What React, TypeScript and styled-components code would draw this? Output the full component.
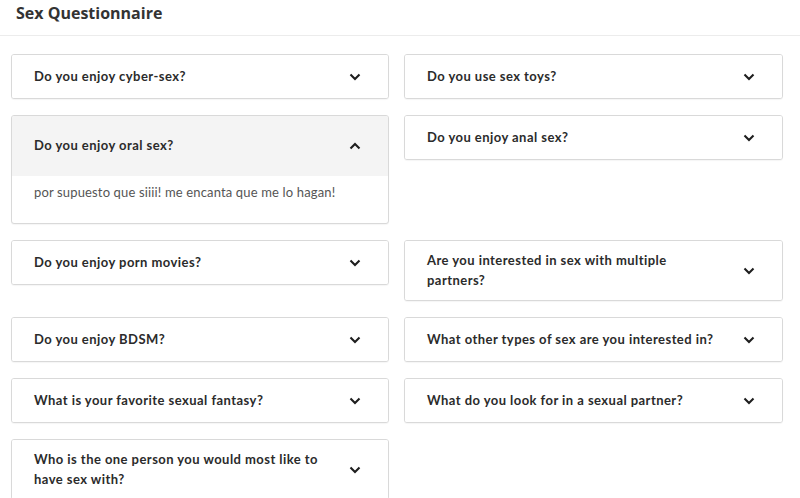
import React from "react";
import styled, { createGlobalStyle } from "styled-components";

const Global = createGlobalStyle`
  html, body { margin: 0; padding: 0; background: #fff; }
  body { font-family: Lato, "Liberation Sans", Arial, sans-serif; color: #333; }
  * { box-sizing: border-box; }
`;

const Page = styled.div`
  width: 800px;
  height: 498px;
  overflow: hidden;
  background: #fff;
`;

const TitleBar = styled.div`
  height: 36px;
  padding: 0 0 0 16px;
  border-bottom: 1px solid #ececec;
  display: flex;
  align-items: flex-start;
`;

const Title = styled.h2`
  margin: 3px 0 0;
  font-family: "Open Sans", "Liberation Sans", Arial, sans-serif;
  font-size: 16px;
  font-weight: 700;
  color: #333;
  line-height: 20px;
`;

const Grid = styled.div`
  display: grid;
  grid-template-columns: 378px 379px;
  column-gap: 15px;
  row-gap: 16px;
  align-items: start;
  padding: 18px 0 0 11px;
`;

const Card = styled.div`
  border: 1px solid #d9d9d9;
  border-radius: 3px;
  background: #fff;
  box-shadow: 0 1px 1px rgba(0, 0, 0, 0.04);
  overflow: hidden;
`;

const Header = styled.div<{ $open?: boolean }>`
  display: flex;
  align-items: center;
  justify-content: space-between;
  min-height: ${(p) => (p.$open ? "60px" : "43px")};
  padding: 10px 26px 10px 22px;
  background: ${(p) => (p.$open ? "#f4f4f4" : "#fff")};
`;

const Question = styled.span`
  font-size: 13px;
  font-weight: 700;
  line-height: 19.5px;
  color: #2b2b2b;
  letter-spacing: 0.45px;
  max-width: 295px;
`;

const Answer = styled.div`
  padding: 6px 22px 21px;
  font-size: 13px;
  line-height: 20px;
  color: #555;
  letter-spacing: 0.15px;
`;

const Chevron = ({ up }: { up?: boolean }) => (
  <svg width="14" height="10" viewBox="0 0 14 10" style={{ flexShrink: 0 }}>
    <path
      d={up ? "M2.5 7.5 L7 3 L11.5 7.5" : "M2.5 2.5 L7 7 L11.5 2.5"}
      fill="none"
      stroke="#1e1e1e"
      strokeWidth="2.1"
    />
  </svg>
);

type Item = { q: string; a?: string };

const items: Item[] = [
  { q: "Do you enjoy cyber-sex?" },
  { q: "Do you use sex toys?" },
  { q: "Do you enjoy oral sex?", a: "por supuesto que siiii! me encanta que me lo hagan!" },
  { q: "Do you enjoy anal sex?" },
  { q: "Do you enjoy porn movies?" },
  { q: "Are you interested in sex with multiple partners?" },
  { q: "Do you enjoy BDSM?" },
  { q: "What other types of sex are you interested in?" },
  { q: "What is your favorite sexual fantasy?" },
  { q: "What do you look for in a sexual partner?" },
  { q: "Who is the one person you would most like to have sex with?" },
];

export default function App() {
  return (
    <Page>
      <Global />
      <TitleBar>
        <Title>Sex Questionnaire</Title>
      </TitleBar>
      <Grid>
        {items.map((it) => (
          <Card key={it.q}>
            <Header $open={!!it.a}>
              <Question>{it.q}</Question>
              <Chevron up={!!it.a} />
            </Header>
            {it.a && <Answer>{it.a}</Answer>}
          </Card>
        ))}
      </Grid>
    </Page>
  );
}
